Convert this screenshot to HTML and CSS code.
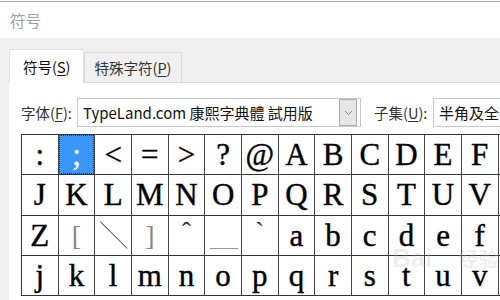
FILE: index.html
```html
<!DOCTYPE html>
<html lang="zh-CN">
<head>
  <meta charset="UTF-8">
  <title>符号</title>
  <link rel="stylesheet" href="styles.css">
</head>
<body>
  <div class="topline"></div>
  <div class="title">符号</div>

  <div class="dialog">
    <div class="tabs">
      <div class="tab active">符号(<u>S</u>)</div>
      <div class="tab">特殊字符(<u>P</u>)</div>
    </div>

    <div class="panel">
      <div class="fields">
        <label class="lbl">字体(<u>F</u>):</label>
        <div class="combo font-combo">
          <span class="combo-text">TypeLand.com 康熙字典體 試用版</span>
          <span class="drop">
            <svg width="9" height="6" viewBox="0 0 9 6"><path d="M1 1 L4.5 4.5 L8 1" fill="none" stroke="#888" stroke-width="1"/></svg>
          </span>
        </div>
        <label class="lbl subset-lbl">子集(<u>U</u>):</label>
        <div class="combo subset-combo">
          <span class="combo-text">半角及全角字符</span>
        </div>
      </div>

      <div class="grid">
        <div class="cell">:</div><div class="cell sel"><span>;</span></div><div class="cell">&lt;</div><div class="cell">=</div><div class="cell">&gt;</div><div class="cell">?</div><div class="cell">@</div><div class="cell">A</div><div class="cell">B</div><div class="cell">C</div><div class="cell">D</div><div class="cell">E</div><div class="cell">F</div><div class="cell">G</div>
        <div class="cell">J</div><div class="cell">K</div><div class="cell">L</div><div class="cell">M</div><div class="cell">N</div><div class="cell">O</div><div class="cell">P</div><div class="cell">Q</div><div class="cell">R</div><div class="cell">S</div><div class="cell">T</div><div class="cell">U</div><div class="cell">V</div><div class="cell">W</div>
        <div class="cell">Z</div><div class="cell thin">[</div><div class="cell thin slash"></div><div class="cell thin">]</div><div class="cell thin caret">ˆ</div><div class="cell thin under"></div><div class="cell thin caret">`</div><div class="cell">a</div><div class="cell">b</div><div class="cell">c</div><div class="cell">d</div><div class="cell">e</div><div class="cell">f</div><div class="cell">g</div>
        <div class="cell">j</div><div class="cell">k</div><div class="cell">l</div><div class="cell">m</div><div class="cell">n</div><div class="cell">o</div><div class="cell">p</div><div class="cell">q</div><div class="cell">r</div><div class="cell">s</div><div class="cell">t</div><div class="cell">u</div><div class="cell">v</div><div class="cell">w</div>
      </div>
    </div>
  </div>

  <div class="watermark">Bai<span>经验</span></div>
</body>
</html>
```

FILE: styles.css
```css
body {
  margin: 0;
  background: #fff;
  font-family: "Noto Sans CJK SC", "Noto Sans", sans-serif;
  overflow: hidden;
  width: 500px;
  height: 300px;
  position: relative;
}

.topline {
  margin-top: 1px;
  height: 1px;
  background: #a8a8a8;
}

.title {
  height: 36px;
  padding-left: 10px;
  font-size: 15.5px;
  line-height: 36px;
  color: #a0a0a0;
}

.dialog {
  background: #f0f0f0;
  padding-top: 11px;
  padding-left: 9px;
  height: 251px;
  overflow: hidden;
}

.tabs {
  display: flex;
  align-items: flex-end;
  height: 33px;
  border-bottom: 1px solid #dadada;
}

.tab {
  height: 30px;
  padding: 0 10px 0 9px;
  font-size: 14.5px;
  line-height: 29px;
  color: #333;
  border: 1px solid #d9d9d9;
  border-bottom: none;
  box-sizing: border-box;
}

.tab.active {
  height: 34px;
  margin-bottom: -1px;
  padding: 0 13px 0 13px;
  line-height: 33px;
  background: #fff;
  color: #111;
  border-color: #e2e2e2;
}

.tab u,
.lbl u {
  text-underline-offset: 2px;
}

.panel {
  background: #fff;
  height: 230px;
  padding: 15px 0 0 12px;
  overflow: hidden;
}

.fields {
  display: flex;
  align-items: center;
  height: 29px;
  white-space: nowrap;
}

.lbl {
  flex-shrink: 0;
  font-size: 14.5px;
  color: #333;
  width: 56px;
}

.combo {
  flex-shrink: 0;
  box-sizing: border-box;
  height: 29px;
  border: 1px solid #c8c8c8;
  display: flex;
  align-items: center;
  font-size: 15px;
  color: #111;
  overflow: hidden;
}

.combo-text {
  padding-left: 5px;
  flex: 1;
}

.font-combo {
  width: 284px;
  padding-right: 3px;
}

.drop {
  flex-shrink: 0;
  width: 16px;
  height: 25px;
  background: #e6e6e6;
  border: 1px solid #adadad;
  display: flex;
  align-items: center;
  justify-content: center;
}

.subset-lbl {
  margin-left: 13px;
  width: 59px;
}

.subset-combo {
  width: 120px;
}

.grid {
  margin-top: 7px;
  display: grid;
  grid-template-columns: repeat(14, 36.67px);
  grid-auto-rows: 40.33px;
  border-top: 1px solid #333;
  border-left: 1px solid #333;
  width: max-content;
  font-family: "Liberation Serif", "DejaVu Serif", serif;
}

.cell {
  box-sizing: border-box;
  border-right: 1px solid #444;
  border-bottom: 1px solid #333;
  font-size: 31px;
  line-height: 40px;
  text-align: center;
  color: #000;
  -webkit-text-stroke: 0.4px #000;
  position: relative;
}

.cell.sel span {
  display: block;
  height: 100%;
  background: #3a96f8;
  color: #fff;
  -webkit-text-stroke: 0.4px #fff;
  outline: 1px dotted #333;
  outline-offset: -1px;
}

.cell.thin {
  color: #888;
  font-size: 28px;
  -webkit-text-stroke: 0;
}

.cell.caret {
  line-height: 32px;
  color: #333;
}

.cell.slash::before {
  content: "";
  position: absolute;
  left: 5px;
  top: 6px;
  width: 1px;
  height: 38px;
  background: #555;
  transform: rotate(-45deg);
  transform-origin: top left;
}

.cell.under::before {
  content: "";
  position: absolute;
  left: 5px;
  right: 3px;
  bottom: 6px;
  height: 1px;
  background: #999;
}

.watermark {
  position: absolute;
  left: 392px;
  top: 243px;
  font-family: "Liberation Sans", "Noto Sans CJK SC", sans-serif;
  font-size: 26px;
  font-weight: bold;
  color: rgba(180, 180, 180, 0.22);
  pointer-events: none;
}

.watermark span {
  font-size: 20px;
  margin-left: 26px;
}
```
